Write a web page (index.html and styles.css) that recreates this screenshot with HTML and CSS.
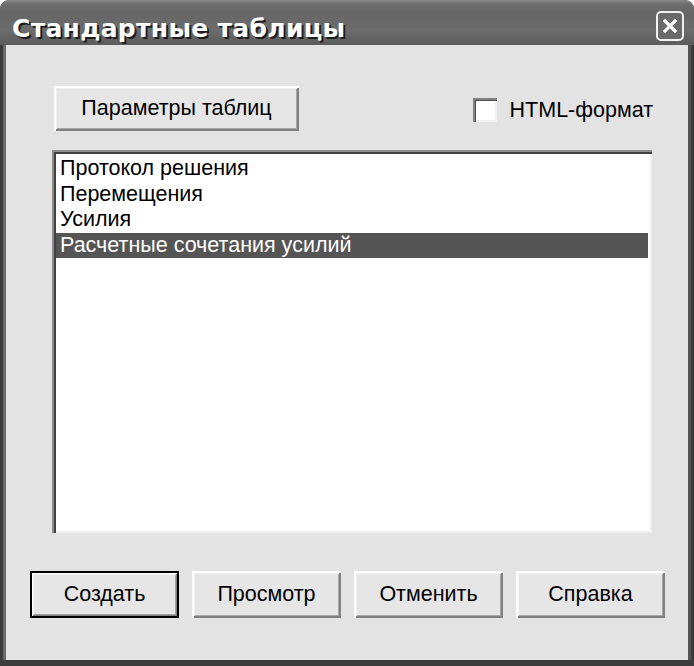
FILE: index.html
```html
<!DOCTYPE html>
<html lang="ru">
<head>
<meta charset="utf-8">
<title>Стандартные таблицы</title>
<link rel="stylesheet" href="styles.css">
</head>
<body>
<div class="window">
  <div class="titlebar">
    <span class="title">Стандартные таблицы</span>
    <span class="close">
      <svg width="28" height="30" viewBox="0 0 28 30">
        <rect x="1" y="1" width="26" height="28" rx="4" ry="4" fill="#6a6a6a" stroke="#f0f0f0" stroke-width="2"/>
        <path d="M9 10 L19 20 M19 10 L9 20" stroke="#ffffff" stroke-width="3.2" stroke-linecap="square"/>
      </svg>
    </span>
  </div>
  <div class="client">
    <div class="toprow">
      <button class="btn btn-params">Параметры таблиц</button>
      <label class="check"><span class="box"></span><span>HTML-формат</span></label>
    </div>
    <div class="listbox">
      <div class="item">Протокол решения</div>
      <div class="item">Перемещения</div>
      <div class="item">Усилия</div>
      <div class="item selected">Расчетные сочетания усилий</div>
    </div>
    <div class="buttons">
      <button class="btn btn-default">Создать</button>
      <button class="btn">Просмотр</button>
      <button class="btn">Отменить</button>
      <button class="btn">Справка</button>
    </div>
  </div>
</div>
</body>
</html>
```
FILE: styles.css
```css
* { box-sizing: border-box; }
html, body { margin: 0; padding: 0; background: #ffffff; }
body { font-family: "Liberation Sans", Arial, sans-serif; }

.window {
  width: 694px;
  height: 666px;
  display: flex;
  flex-direction: column;
  background: #3c3c3c;
  border-radius: 9px 9px 0 0;
  overflow: hidden;
}

.titlebar {
  height: 45px;
  flex: none;
  display: flex;
  align-items: center;
  justify-content: space-between;
  padding: 0 10px 0 12px;
  background: linear-gradient(to bottom, #8a8a8a 0px, #6e6e6e 4px, #666666 14px, #6c6c6c 30px, #5c5c5c 44px);
}

.title {
  color: #ffffff;
  font-family: "DejaVu Sans", sans-serif;
  font-weight: bold;
  font-size: 25px;
  letter-spacing: 0.3px;
  text-shadow: 2px 2px 0 #1e1e1e;
  margin-top: 11px;
}

.close { display: flex; margin-top: 6px; }

.client {
  flex: 1;
  margin: 0 6px 6px 6px;
  background: #e3e3e3;
  padding: 41px 0 0 0;
  display: flex;
  flex-direction: column;
  box-shadow: -3px 0 0 #6a6a6a, 3px 0 0 #555555;
}

.toprow {
  display: flex;
  align-items: center;
  padding-left: 48px;
}

.btn {
  font-family: "Liberation Sans", Arial, sans-serif;
  font-size: 21.5px;
  color: #000;
  background: #e6e6e6;
  border: none;
  padding: 0;
  height: 45px;
  box-shadow: inset 2px 2px 0 #ffffff, inset -2px -2px 0 #808080, inset 3px 3px 0 #f0f0f0, inset -3px -3px 0 #a8a8a8;
}

.btn-params { width: 245px; }

.check {
  display: flex;
  align-items: center;
  gap: 13px;
  margin-left: auto;
  margin-right: 35px;
  font-size: 21.5px;
  margin-top: 3px;
}

.box {
  width: 24px;
  height: 24px;
  background: #ffffff;
  box-shadow: inset 2px 2px 0 #808080, inset 3px 3px 0 #505050, inset -2px -2px 0 #f0f0f0;
}

.listbox {
  margin: 19px 0 0 46px;
  width: 600px;
  height: 383px;
  background: #ffffff;
  padding: 6px 4px 0 4px;
  box-shadow: inset 2px 2px 0 #8c8c8c, inset 4px 4px 0 #404040, inset -2px -2px 0 #f0f0f0;
  font-size: 21.5px;
  line-height: 25.5px;
}

.item { padding-left: 4px; color: #000; white-space: nowrap; }
.item.selected { background: #555555; color: #ffffff; }

.buttons {
  display: flex;
  gap: 13px;
  margin: 38px 0 0 24px;
}

.buttons .btn { width: 149px; height: 47px; }

.btn-default {
  outline: 2px solid #000;
  outline-offset: -2px;
  box-shadow: inset 3px 3px 0 #ffffff, inset -3px -3px 0 #808080, inset 4px 4px 0 #f0f0f0, inset -4px -4px 0 #a0a0a0;
}
```
